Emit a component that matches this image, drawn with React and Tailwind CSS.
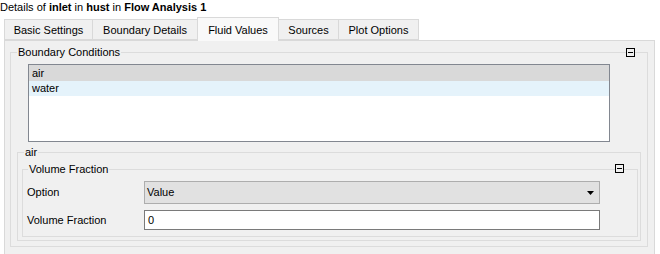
import React from 'react';

const CollapseIcon = ({ className }) => (
  <svg width="9" height="9" viewBox="0 0 9 9" className={className}>
    <rect x="0.5" y="0.5" width="8" height="8" fill="#f0f0f0" stroke="#000" />
    <rect x="2" y="4" width="5" height="1" fill="#000" />
  </svg>
);

const GroupBox = ({ title, titleLeft, className, collapse, iconClass, children }) => (
  <div className={`relative border border-[#dcdcdc] ${className}`}>
    <span className={`absolute top-[-7px] ${titleLeft} bg-[#f0f0f0] px-px leading-[13px]`}>{title}</span>
    {collapse && <CollapseIcon className={`absolute ${iconClass}`} />}
    {children}
  </div>
);

const tabs = [
  { label: 'Basic Settings', w: 'w-[89px]' },
  { label: 'Boundary Details', w: 'w-[106px]' },
  { label: 'Fluid Values', w: 'w-[82px]', active: true },
  { label: 'Sources', w: 'w-[61px]' },
  { label: 'Plot Options', w: 'w-[81px]' },
];

export default function App() {
  return (
    <div className="w-[660px] h-[254px] overflow-hidden bg-white text-[11px] text-black font-['Liberation_Sans',Arial,sans-serif]">
      <div className="h-[17px] pt-px leading-[13px] whitespace-nowrap">
        Details of <b>inlet</b> in <b>hust</b> in <b>Flow Analysis 1</b>
      </div>

      {/* tab strip */}
      <div className="relative z-10 flex items-start h-[23px] pl-[4px]">
        {tabs.map((t, i) => (
          <div
            key={t.label}
            className={`${t.w} ${i > 0 ? '-ml-px' : ''} flex justify-center border border-[#d9d9d9] ${
              t.active
                ? 'relative z-10 h-[24px] bg-[#f9f9f9] border-b-0 pt-[6px]'
                : 'mt-[2px] h-[21px] bg-[#f0f0f0] pt-[4px]'
            } leading-[13px] whitespace-nowrap`}
          >
            {t.label}
          </div>
        ))}
      </div>

      {/* pane */}
      <div className="ml-[4px] w-[651px] h-[230px] border border-[#d9d9d9] bg-[#f0f0f0]">
        <GroupBox
          title="Boundary Conditions"
          titleLeft="left-[6px]"
          className="ml-[5px] mt-[11px] w-[638px] h-[195px]"
          collapse
          iconClass="right-[12px] top-[-5px]"
        >
          <div className="ml-[17px] mt-[11px] w-[582px] h-[78px] border border-[#828790] bg-white">
            <div className="h-[16px] bg-[#d9d9d9] pl-[3px] leading-[16px]">air</div>
            <div className="h-[15px] bg-[#e5f3fb] pl-[3px] leading-[15px]">water</div>
          </div>

          <GroupBox title="air" titleLeft="left-[6px]" className="ml-[6px] mt-[10px] w-[624px] h-[89px]">
            <GroupBox
              title="Volume Fraction"
              titleLeft="left-[5px]"
              className="ml-[4px] mt-[16px] w-[616px] h-[68px]"
              collapse
              iconClass="right-[13px] top-[-6px]"
            >
              <div className="mt-[11px] flex items-center h-[23px]">
                <div className="w-[121px] pl-[4px]">Option</div>
                <div className="w-[456px] h-[23px] flex items-center justify-between border border-[#adadad] bg-[#e1e1e1] pl-[2px] pr-[5px]">
                  <span>Value</span>
                  <svg width="7" height="4" viewBox="0 0 7 4">
                    <polygon points="0,0 7,0 3.5,4" fill="#000" />
                  </svg>
                </div>
              </div>
              <div className="mt-[6px] flex items-center h-[20px]">
                <div className="w-[121px] pl-[4px]">Volume Fraction</div>
                <div className="w-[456px] h-[20px] flex items-center border border-[#7a7a7a] bg-white pl-[3px]">0</div>
              </div>
            </GroupBox>
          </GroupBox>
        </GroupBox>
      </div>
    </div>
  );
}
